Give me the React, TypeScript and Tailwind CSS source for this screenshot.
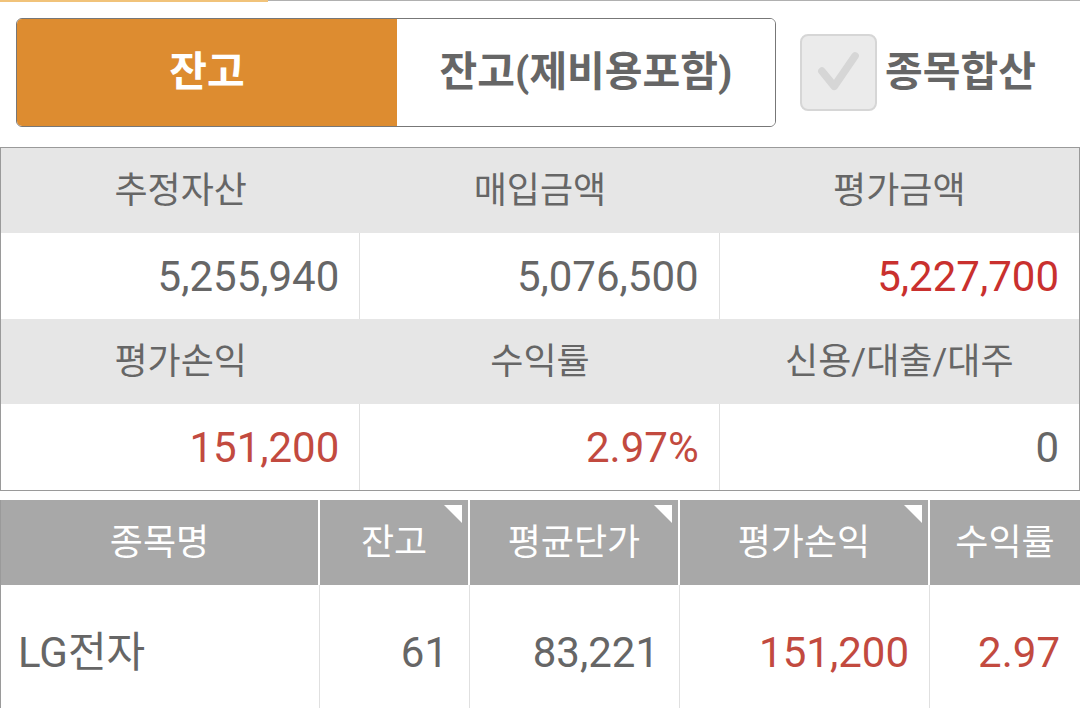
import React from 'react';

const font = "font-['Roboto','Noto_Sans_CJK_KR',sans-serif]";

const Triangle = () => (
    <div className="absolute top-[5px] right-[6px] w-[18px] h-[18px] bg-white [clip-path:polygon(0_0,100%_0,100%_100%)]" />
);

const Checkbox = () => (
    <div className="w-[77px] h-[77px] rounded-lg bg-[#ebebeb] border-2 border-[#d6d6d6] flex items-center justify-center">
        <svg width="77" height="77" viewBox="0 0 77 77">
            <path d="M21 37 L34 53 L56 21" fill="none" stroke="#d6d6d6" strokeWidth="8" strokeLinecap="round" strokeLinejoin="round" />
        </svg>
    </div>
);

const SummaryHeader = ({ labels }: { labels: string[] }) => (
    <div className="grid grid-cols-3 h-[85px] bg-[#e6e6e6]">
        {labels.map((l) => (
            <div key={l} className="flex items-center justify-center text-[36px] text-[#666]">
                {l}
            </div>
        ))}
    </div>
);

const SummaryValues = ({ values }: { values: { v: string; c: string }[] }) => (
    <div className="grid grid-cols-3 h-[86px] bg-white divide-x divide-[#e0e0e0]">
        {values.map((x, i) => (
            <div key={i} className={`flex items-center justify-end pr-5 text-[42px] ${x.c}`}>
                {x.v}
            </div>
        ))}
    </div>
);

const App = () => {
    return (
        <div className={`w-[1080px] h-[708px] overflow-hidden bg-white ${font}`}>
            {/* top rule */}
            <div className="flex h-[2px]">
                <div className="w-[268px] bg-[#f1c37a]" />
                <div className="flex-1 bg-[#b0b0b0] h-px" />
            </div>

            {/* toggle + checkbox */}
            <div className="flex items-center pl-4 pt-4 h-[125px]">
                <div className="flex w-[760px] h-[109px] rounded-md border border-[#777] overflow-hidden">
                    <div className="w-[380px] bg-[#dd8c30] flex items-center justify-center text-white text-[41px] font-bold">
                        잔고
                    </div>
                    <div className="flex-1 bg-white flex items-center justify-center text-[#666] text-[41px] font-bold">
                        잔고(제비용포함)
                    </div>
                </div>
                <div className="ml-6 flex items-center gap-2">
                    <Checkbox />
                    <span className="text-[41px] font-bold text-[#666]">종목합산</span>
                </div>
            </div>

            {/* summary table */}
            <div className="mt-5 border border-[#9a9a9a]">
                <SummaryHeader labels={['추정자산', '매입금액', '평가금액']} />
                <SummaryValues
                    values={[
                        { v: '5,255,940', c: 'text-[#666]' },
                        { v: '5,076,500', c: 'text-[#666]' },
                        { v: '5,227,700', c: 'text-[#c9302e]' },
                    ]}
                />
                <SummaryHeader labels={['평가손익', '수익률', '신용/대출/대주']} />
                <SummaryValues
                    values={[
                        { v: '151,200', c: 'text-[#c24a3f]' },
                        { v: '2.97%', c: 'text-[#c24a3f]' },
                        { v: '0', c: 'text-[#666]' },
                    ]}
                />
            </div>

            {/* holdings table */}
            <div className="mt-[9px] border-l border-[#9a9a9a]">
                <div className="grid grid-cols-[319px_150px_210px_250px_1fr] h-[85px] bg-[#a8a8a8] text-white text-[36px] divide-x-2 divide-white">
                    <div className="flex items-center justify-center">종목명</div>
                    <div className="relative flex items-center justify-center">
                        잔고
                        <Triangle />
                    </div>
                    <div className="relative flex items-center justify-center">
                        평균단가
                        <Triangle />
                    </div>
                    <div className="relative flex items-center justify-center">
                        평가손익
                        <Triangle />
                    </div>
                    <div className="flex items-center justify-center">수익률</div>
                </div>
                <div className="grid grid-cols-[319px_150px_210px_250px_1fr] h-[134px] text-[42px] divide-x divide-[#e0e0e0]">
                    <div className="flex items-center pl-[17px] text-[#666]">LG전자</div>
                    <div className="flex items-center justify-end pr-[21px] text-[#666]">61</div>
                    <div className="flex items-center justify-end pr-5 text-[#666]">83,221</div>
                    <div className="flex items-center justify-end pr-5 text-[#c24a3f]">151,200</div>
                    <div className="flex items-center justify-end pr-5 text-[#c24a3f]">2.97</div>
                </div>
            </div>
        </div>
    );
};

export default App;
